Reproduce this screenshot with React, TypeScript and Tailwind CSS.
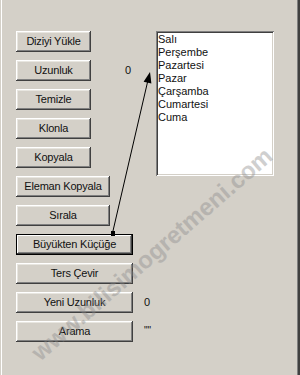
import React from "react";

const raised =
  "shadow-[inset_-1px_-1px_#404040,inset_1px_1px_#ffffff,inset_-2px_-2px_#808080,inset_2px_2px_#e8e6e0]";
const focused =
  "shadow-[inset_0_0_0_1px_#000000,inset_-2px_-2px_#404040,inset_2px_2px_#ffffff,inset_-3px_-3px_#808080]";

interface Row {
  label: string;
  width: string;
  note?: string;
  noteGap?: string;
  isDefault?: boolean;
}

const rows: Row[] = [
  { label: "Diziyi Yükle", width: "w-[75px]" },
  { label: "Uzunluk", width: "w-[75px]", note: "0", noteGap: "ml-[34px]" },
  { label: "Temizle", width: "w-[75px]" },
  { label: "Klonla", width: "w-[75px]" },
  { label: "Kopyala", width: "w-[75px]" },
  { label: "Eleman Kopyala", width: "w-[94px]" },
  { label: "Sırala", width: "w-[94px]" },
  { label: "Büyükten Küçüğe", width: "w-[117px]", isDefault: true },
  { label: "Ters Çevir", width: "w-[117px]" },
  { label: "Yeni Uzunluk", width: "w-[117px]", note: "0", noteGap: "ml-[11px]" },
  { label: "Arama", width: "w-[117px]", note: '""', noteGap: "ml-[11px] self-start mt-[3px] text-[10px]" },
];

const days = ["Salı", "Perşembe", "Pazartesi", "Pazar", "Çarşamba", "Cumartesi", "Cuma"];

export default function App() {
  return (
    <div
      className="relative w-[300px] h-[375px] overflow-hidden bg-[#d4d0c8] text-[#111] text-[11px] leading-[13px]"
      style={{ fontFamily: '"Liberation Sans", Arial, sans-serif' }}
    >
      <div className="flex h-full">
        <div className="w-[1px] bg-[#d4d0c8]" />
        <div className="w-[1px] bg-white" />
        <div className="flex flex-1 pt-[31px] pl-[14px]">
          <div className="flex flex-col gap-[8px] w-[140px]">
            {rows.map((r) => (
              <div key={r.label} className="flex items-center h-[21px]">
                <div
                  className={`${r.width} h-[21px] flex items-center justify-center tracking-[-0.2px] ${
                    r.isDefault ? focused : raised
                  }`}
                >
                  {r.label}
                </div>
                {r.note && <span className={r.noteGap}>{r.note}</span>}
              </div>
            ))}
          </div>
          <div className="w-[118px] h-[145px] bg-white pt-[2px] px-[2px] shadow-[inset_1px_1px_#808080,inset_-1px_-1px_#ffffff,inset_2px_2px_#404040,inset_-2px_-2px_#d4d0c8]">
            {days.map((d) => (
              <div key={d} className="h-[13px]">
                {d}
              </div>
            ))}
          </div>
        </div>
        <div className="w-[1px] bg-[#808080]" />
        <div className="w-[2px] bg-[#404040]" />
      </div>

      <svg className="absolute inset-0 pointer-events-none" width="300" height="375">
        <line x1="112.5" y1="233" x2="148" y2="80" stroke="#000" strokeWidth="1" />
        <polygon points="150,72 151.4,83.6 143.6,81.8" fill="#000" />
        <rect x="111" y="231" width="4" height="5" fill="#000" />
      </svg>

      <div
        className="absolute left-[152px] top-[254px] whitespace-nowrap font-semibold text-[24px] leading-none text-[#8a8a8a] opacity-40 pointer-events-none"
        style={{ transform: "translate(-50%, -50%) rotate(-41deg)" }}
      >
        www.bilisimogretmeni.com
      </div>
    </div>
  );
}
